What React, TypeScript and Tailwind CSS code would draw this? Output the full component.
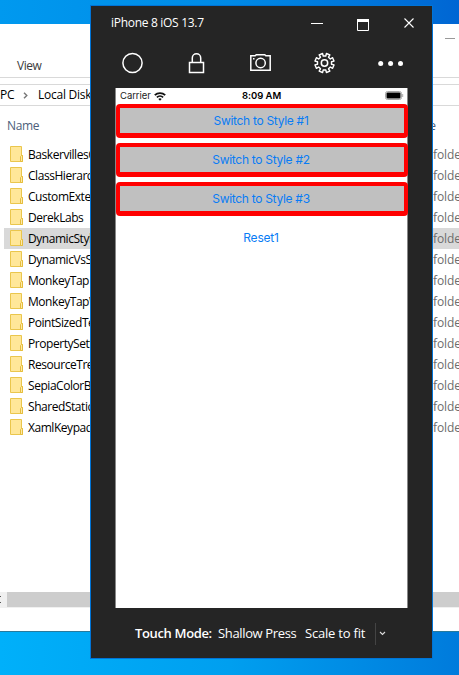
import React from "react";

const folders = [
  { name: "BaskervillesCase" },
  { name: "ClassHierarchy" },
  { name: "CustomExtension" },
  { name: "DerekLabs" },
  { name: "DynamicStyles", selected: true },
  { name: "DynamicVsStatic" },
  { name: "MonkeyTap" },
  { name: "MonkeyTapWithSound" },
  { name: "PointSizedText" },
  { name: "PropertySetters" },
  { name: "ResourceTrees" },
  { name: "SepiaColorBox" },
  { name: "SharedStatics" },
  { name: "XamlKeypad" },
];

// Outline of an eight-toothed gear, with a notch at the top.
function gearPath(cx: number, cy: number) {
  const corners: string[] = [];
  for (let tooth = 0; tooth < 8; tooth++) {
    const middle = 22.5 + tooth * 45;
    for (const [offset, radius] of [[-12, 7.1], [-11, 9.7], [11, 9.7], [12, 7.1]]) {
      const angle = ((middle + offset) * Math.PI) / 180;
      corners.push(`${(cx + radius * Math.sin(angle)).toFixed(2)} ${(cy - radius * Math.cos(angle)).toFixed(2)}`);
    }
  }
  return `M${corners.join("L")}z`;
}

function FolderIcon() {
  return (
    <svg width="14" height="16" viewBox="0 0 14 16" className="mb-px shrink-0">
      <path d="M.5.5h11v9h1v6H.5z" fill="#ffe799" stroke="#eac64c" />
      <path d="M10.5 15.5v-5l1-1h1v6z" fill="#ffe9a6" stroke="#e5bd3d" />
    </svg>
  );
}

function Explorer() {
  return (
    <div className="absolute left-0 top-[24px] flex h-[608px] w-[459px] flex-col overflow-hidden border-b border-[#287a9d] bg-white">
      <div className="flex h-[53px] shrink-0 justify-between">
        <span className="pl-[17px] pt-[34px] text-[12px] leading-[16px] tracking-[-0.45px] text-[#3b3b3b]">View</span>
        <span className="mr-[4px] mt-[14px] h-px w-[10px] bg-[#999]" />
      </div>
      <div className="h-[8px] shrink-0 border-b border-t border-[#d9d9d9]" />
      <div className="flex h-[21px] shrink-0 items-center whitespace-nowrap border-b border-[#d9d9d9] text-[12px] tracking-[-0.25px] text-black">
        <span className="w-[23px]">PC</span>
        <svg width="5" height="7" viewBox="0 0 5 7" className="mr-[10px]">
          <path d="M1 .7 3.8 3.5 1 6.3" fill="none" stroke="#777" strokeWidth="1.4" />
        </svg>
        <span>Local Disk (C:)</span>
      </div>
      <div className="flex h-[38px] shrink-0 pt-[12px] text-[12px] leading-[16px] text-[#4c607a]">
        <span className="w-[400px] pl-[7px] tracking-[-0.35px]">Name</span>
        <span className="flex w-[36px] justify-end">Type</span>
      </div>
      <div className="flex flex-col">
        {folders.map((f) => (
          <div key={f.name} className={`ml-[4px] flex h-[21px] items-center text-[12px] tracking-[-0.45px] ${f.selected ? "bg-[#d9d9d9]" : ""}`}>
            <div className="flex w-[399px] shrink-0 items-center pl-[6px]">
              <FolderIcon />
              <span className="pl-[4px] text-black">{f.name}</span>
            </div>
            <span className="whitespace-nowrap pl-[30px] tracking-[-0.1px] text-[#6d6d6d]">folde</span>
          </div>
        ))}
      </div>
      <div className="mt-[154px] flex h-[16px] shrink-0 bg-[#f0f0f0]">
        <div className="w-[7px] pt-[4px]">
          <div className="h-[7px] w-px border-y border-[#555]" />
        </div>
        <div className="h-[15px] grow bg-[#cdcdcd]" />
      </div>
    </div>
  );
}

function Toolbar() {
  return (
    <svg width="341" height="34" viewBox="91 46 341 34" fill="none" stroke="#fff" strokeWidth="1.5" className="shrink-0">
      <circle cx="132.5" cy="63" r="9.6" />
      <path d="M189.5 62.5h14v10h-14zM192.3 62v-4a4.2 4.2 0 0 1 8.4 0v4" />
      <path d="M250.8 55.7h4.4l1-.9h8.6l1 .9h4.4v14.6h-19.4z" />
      <circle cx="260.6" cy="63" r="4.7" />
      <path d="M253 58.7h1.5" />
      <path d={gearPath(324.5, 63)} strokeWidth="1.4" strokeLinejoin="round" />
      <circle cx="324.5" cy="63" r="3.2" />
      <g fill="#fff" stroke="none">
        <circle cx="380.7" cy="63.5" r="2.5" />
        <circle cx="390.6" cy="63.5" r="2.5" />
        <circle cx="400.5" cy="63.5" r="2.5" />
      </g>
    </svg>
  );
}

function StyledButton({ label }: { label: string }) {
  return (
    <div className="h-[34px] rounded-[4px] bg-[#f00] px-[4px] pb-[5px] pt-[4px]">
      <div className="flex h-full items-center justify-center bg-[#c0c0c0] pr-[2px] pt-px text-[12px] tracking-[-0.3px] text-[#087cf5]">{label}</div>
    </div>
  );
}

function Phone() {
  return (
    <div className="ml-[24px] h-[520px] w-[293px] shrink-0 border-x border-[#888] bg-white font-['Inter',sans-serif]">
      <div className="flex h-[16px] items-center text-black">
        <span className="w-[38px] pl-[4px] pt-px text-[9.5px] tracking-[-0.05px] text-[#222]">Carrier</span>
        <svg width="12" height="9" viewBox="0 0 12 9" fill="none" stroke="#111" strokeWidth="1.8">
          <path d="M.8 3.2a7.4 7.4 0 0 1 10.4 0M2.9 5.4a4.4 4.4 0 0 1 6.2 0" />
          <path d="M4.3 7 6 8.8 7.7 7a2.5 2.5 0 0 0-3.4 0z" fill="#111" stroke="none" />
        </svg>
        <span className="pl-[76px] pt-px text-[9.5px] font-semibold tracking-[-0.05px]">8:09 AM</span>
        <svg width="19" height="9" viewBox="0 0 19 9" className="mb-px ml-auto mr-[3px]">
          <rect x=".5" y=".5" width="16" height="8" rx="2" fill="#fff" stroke="#aaa" />
          <rect x="1.5" y="1.5" width="14" height="6" rx="1" fill="#000" />
          <path d="M17.7 3v3" stroke="#aaa" />
        </svg>
      </div>
      <div className="-mr-px flex flex-col gap-[5px]">
        <StyledButton label="Switch to Style #1" />
        <StyledButton label="Switch to Style #2" />
        <StyledButton label="Switch to Style #3" />
      </div>
      <div className="mt-[14px] pr-px text-center text-[12px] leading-[16px] tracking-[-0.2px] text-[#087cf5]">Reset1</div>
    </div>
  );
}

function Simulator() {
  return (
    <div className="absolute left-[90px] top-[5px] flex h-[654px] w-[343px] flex-col border border-[#0074d7] bg-[#252525] text-white">
      <div className="flex h-[40px] shrink-0">
        <span className="grow pl-[20px] pt-[8px] text-[12px] leading-[18px] tracking-[-0.3px]">iPhone 8 iOS 13.7</span>
        <svg width="121" height="40" viewBox="311 6 121 40" fill="none" stroke="#fff">
          <path d="M311 23.5h12" />
          <path d="M357.5 20.5h11v10h-11z" />
          <path d="M357 20.5h12" strokeWidth="3" />
          <path d="m404.5 18.5 9 9m0-9-9 9" strokeWidth="1.1" />
        </svg>
      </div>
      <Toolbar />
      <div className="h-[8px] shrink-0" />
      <Phone />
      <div className="flex grow items-center whitespace-nowrap pl-[44px] pt-px text-[13px]">
        <span className="w-[83px] font-semibold tracking-[-0.35px]">Touch Mode:</span>
        <span className="w-[87px] tracking-[-0.35px]">Shallow Press</span>
        <span className="w-[70px] tracking-[-0.2px]">Scale to fit</span>
        <span className="h-[22px] w-px bg-[#444]" />
        <svg width="7" height="5" viewBox="0 0 7 5" className="ml-[3px]">
          <path d="M1 1l2.5 2.5L6 1" fill="none" stroke="#ddd" strokeWidth="1.1" />
        </svg>
      </div>
    </div>
  );
}

export default function App() {
  return (
    <div className="relative h-[675px] w-[459px] overflow-hidden bg-[#0078d7] font-['Open_Sans','Noto_Sans',sans-serif]">
      <div className="h-[24px] bg-linear-to-r from-[#0099ef] via-[#008ae6] to-[#0066d3]" />
      <div className="mt-[607px] h-[44px] bg-linear-to-r from-[#00b0fa] via-[#009fef] to-[#007bdc]" />
      <Explorer />
      <Simulator />
    </div>
  );
}
